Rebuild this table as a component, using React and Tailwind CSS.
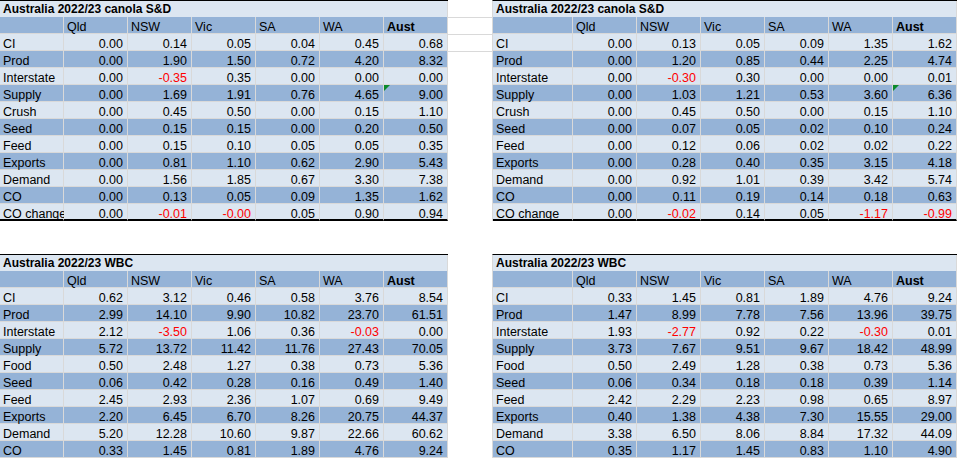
import React from "react";

const canolaL = {
  title: "Australia 2022/23 canola S&D",
  rows: [
    ["CI", "0.00", "0.14", "0.05", "0.04", "0.45", "0.68"],
    ["Prod", "0.00", "1.90", "1.50", "0.72", "4.20", "8.32"],
    ["Interstate", "0.00", "-0.35", "0.35", "0.00", "0.00", "0.00"],
    ["Supply", "0.00", "1.69", "1.91", "0.76", "4.65", "9.00"],
    ["Crush", "0.00", "0.45", "0.50", "0.00", "0.15", "1.10"],
    ["Seed", "0.00", "0.15", "0.15", "0.00", "0.20", "0.50"],
    ["Feed", "0.00", "0.15", "0.10", "0.05", "0.05", "0.35"],
    ["Exports", "0.00", "0.81", "1.10", "0.62", "2.90", "5.43"],
    ["Demand", "0.00", "1.56", "1.85", "0.67", "3.30", "7.38"],
    ["CO", "0.00", "0.13", "0.05", "0.09", "1.35", "1.62"],
    ["CO change", "0.00", "-0.01", "-0.00", "0.05", "0.90", "0.94"],
  ],
};

const canolaR = {
  title: "Australia 2022/23 canola S&D",
  rows: [
    ["CI", "0.00", "0.13", "0.05", "0.09", "1.35", "1.62"],
    ["Prod", "0.00", "1.20", "0.85", "0.44", "2.25", "4.74"],
    ["Interstate", "0.00", "-0.30", "0.30", "0.00", "0.00", "0.01"],
    ["Supply", "0.00", "1.03", "1.21", "0.53", "3.60", "6.36"],
    ["Crush", "0.00", "0.45", "0.50", "0.00", "0.15", "1.10"],
    ["Seed", "0.00", "0.07", "0.05", "0.02", "0.10", "0.24"],
    ["Feed", "0.00", "0.12", "0.06", "0.02", "0.02", "0.22"],
    ["Exports", "0.00", "0.28", "0.40", "0.35", "3.15", "4.18"],
    ["Demand", "0.00", "0.92", "1.01", "0.39", "3.42", "5.74"],
    ["CO", "0.00", "0.11", "0.19", "0.14", "0.18", "0.63"],
    ["CO change", "0.00", "-0.02", "0.14", "0.05", "-1.17", "-0.99"],
  ],
};

const wbcL = {
  title: "Australia 2022/23 WBC",
  rows: [
    ["CI", "0.62", "3.12", "0.46", "0.58", "3.76", "8.54"],
    ["Prod", "2.99", "14.10", "9.90", "10.82", "23.70", "61.51"],
    ["Interstate", "2.12", "-3.50", "1.06", "0.36", "-0.03", "0.00"],
    ["Supply", "5.72", "13.72", "11.42", "11.76", "27.43", "70.05"],
    ["Food", "0.50", "2.48", "1.27", "0.38", "0.73", "5.36"],
    ["Seed", "0.06", "0.42", "0.28", "0.16", "0.49", "1.40"],
    ["Feed", "2.45", "2.93", "2.36", "1.07", "0.69", "9.49"],
    ["Exports", "2.20", "6.45", "6.70", "8.26", "20.75", "44.37"],
    ["Demand", "5.20", "12.28", "10.60", "9.87", "22.66", "60.62"],
    ["CO", "0.33", "1.45", "0.81", "1.89", "4.76", "9.24"],
  ],
};

const wbcR = {
  title: "Australia 2022/23 WBC",
  rows: [
    ["CI", "0.33", "1.45", "0.81", "1.89", "4.76", "9.24"],
    ["Prod", "1.47", "8.99", "7.78", "7.56", "13.96", "39.75"],
    ["Interstate", "1.93", "-2.77", "0.92", "0.22", "-0.30", "0.01"],
    ["Supply", "3.73", "7.67", "9.51", "9.67", "18.42", "48.99"],
    ["Food", "0.50", "2.49", "1.28", "0.38", "0.73", "5.36"],
    ["Seed", "0.06", "0.34", "0.18", "0.18", "0.39", "1.14"],
    ["Feed", "2.42", "2.29", "2.23", "0.98", "0.65", "8.97"],
    ["Exports", "0.40", "1.38", "4.38", "7.30", "15.55", "29.00"],
    ["Demand", "3.38", "6.50", "8.06", "8.84", "17.32", "44.09"],
    ["CO", "0.35", "1.17", "1.45", "0.83", "1.10", "4.90"],
  ],
};

const HEAD = ["", "Qld", "NSW", "Vic", "SA", "WA", "Aust"];

function Table({ data, wide, lastThick }) {
  const gridCls = wide
    ? "grid grid-cols-[80px_repeat(6,64px)]"
    : "grid grid-cols-[64px_repeat(6,64px)]";
  const n = data.rows.length;
  return (
    <div
      className={
        "flex flex-col border-t border-t-black " +
        (wide ? "w-[465px] border-l border-l-[#d9d9d9]" : "w-[448px]")
      }
    >
      <div className="h-[16px] bg-[#dce6f1] border-r border-r-[#d9d9d9] pl-[3px] pt-[2px] leading-[12px] text-[12px] font-bold">
        {data.title}
      </div>
      <div className={gridCls}>
        {HEAD.map((h, i) => (
          <div
            key={i}
            className={
              "h-[17px] bg-[#95b3d7] border-r border-b border-[#d9d9d9] pl-[3px] pt-[4px] leading-[12px] " +
              (i === 6 ? "font-bold" : "")
            }
          >
            {h}
          </div>
        ))}
      </div>
      {data.rows.map((r, ri) => {
        const bg = ri % 2 === 0 ? "bg-[#dce6f1]" : "bg-[#95b3d7]";
        const last = lastThick && ri === n - 1;
        const bcls = last
          ? "border-r border-r-[#d9d9d9] border-b-2 border-b-black"
          : "border-r border-b border-[#d9d9d9]";
        return (
          <div key={ri} className={gridCls}>
            {r.map((c, ci) => (
              <div
                key={ci}
                className={
                  "relative h-[17px] pt-[4px] leading-[12px] " +
                  bg +
                  " " +
                  bcls +
                  " " +
                  (ci === 0
                    ? "pl-[3px] whitespace-nowrap"
                    : "text-right pr-[4px] " +
                      (c.startsWith("-") ? "text-[#ff0000]" : ""))
                }
              >
                {lastThick && ci === 6 && r[0] === "Supply" && (
                  <span className="absolute left-0 top-0 w-0 h-0 border-t-[6px] border-t-[#0a8a2a] border-r-[6px] border-r-transparent" />
                )}
                {c}
              </div>
            ))}
          </div>
        );
      })}
    </div>
  );
}

export default function App() {
  return (
    <div
      className="w-[959px] h-[460px] bg-white text-black text-[12.5px] overflow-hidden"
      style={{ fontFamily: '"Liberation Sans", Arial, sans-serif' }}
    >
      <div className="flex items-start">
        <Table data={canolaL} lastThick />
        <div className="w-[44px] flex flex-col">
          <div className="h-[18px] border-b border-[#d9d9d9]" />
          <div className="h-[17px] border-b border-[#d9d9d9]" />
          <div className="h-[17px] border-b border-[#d9d9d9]" />
        </div>
        <Table data={canolaR} wide lastThick />
      </div>
      <div className="h-[33px]" />
      <div className="flex items-start">
        <Table data={wbcL} />
        <div className="w-[44px]" />
        <Table data={wbcR} wide />
      </div>
    </div>
  );
}
